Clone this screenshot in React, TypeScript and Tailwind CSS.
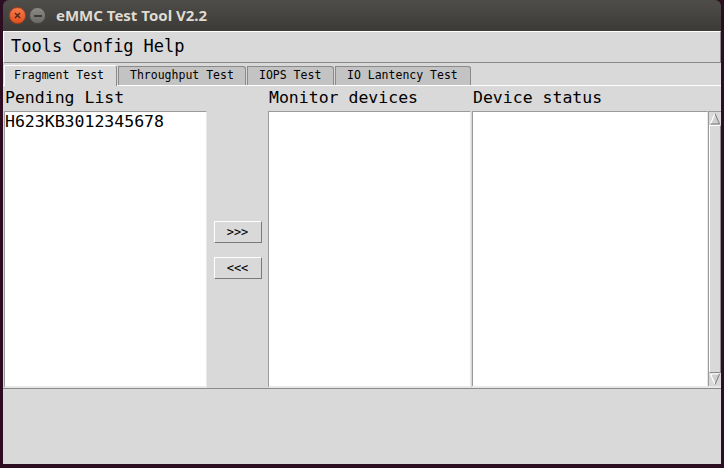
import React from "react";

const mono = { fontFamily: '"DejaVu Sans Mono", "Liberation Mono", monospace' };

function Tab({ label, selected, w }: { label: string; selected?: boolean; w: number }) {
  if (selected) {
    return (
      <div
        className="h-[21px] border-l border-t border-r border-l-white border-t-white border-r-[#8a8a8a] rounded-tr-[3px] bg-[#d9d9d9] flex items-center pl-[9px] text-[11.5px] text-black relative top-[1px]"
        style={{ width: w }}
      >
        {label}
      </div>
    );
  }
  return (
    <div
      className="h-[19px] mt-[2px] border border-b-0 border-[#8a8a8a] rounded-tr-[3px] bg-[#c3c3c3] flex items-center pl-[11px] text-[11.5px] text-black"
      style={{ width: w }}
    >
      {label}
    </div>
  );
}

function Btn({ label }: { label: string }) {
  return (
    <div className="w-[48px] h-[22px] bg-[#d9d9d9] border border-t-white border-l-white border-r-[#7a7a7a] border-b-[#7a7a7a] flex items-center justify-center text-[12px] text-black">
      {label}
    </div>
  );
}

export default function App() {
  return (
    <div className="w-[724px] h-[468px] bg-[#2c0d22] flex flex-col px-[3px] pb-[4px]" style={mono}>
      {/* title bar */}
      <div className="h-[31px] rounded-t-[6px] bg-gradient-to-b from-[#4e4d49] to-[#3c3b37] flex items-center pl-[6px] gap-[3px] shrink-0">
        <div className="w-[17px] h-[17px] rounded-full bg-gradient-to-b from-[#f47a4a] to-[#e2501f] flex items-center justify-center border border-[#b0401a]">
          <svg width="7" height="7" viewBox="0 0 7 7">
            <path d="M1 1 L6 6 M6 1 L1 6" stroke="#4a2414" strokeWidth="1.3" />
          </svg>
        </div>
        <div className="w-[17px] h-[17px] rounded-full bg-gradient-to-b from-[#8a8984] to-[#6c6b67] flex items-center justify-center border border-[#4a4945]">
          <div className="w-[8px] h-[2px] bg-[#3c3b37]" />
        </div>
        <div
          className="ml-[7px] text-[15px] font-bold text-[#dfdbd2]"
          style={{ fontFamily: '"Noto Sans", "DejaVu Sans", sans-serif' }}
        >
          eMMC Test Tool V2.2
        </div>
      </div>

      {/* body */}
      <div className="flex-1 bg-[#d9d9d9] flex flex-col">
        {/* menu */}
        <div className="h-[32px] border-t border-l border-t-white border-l-white border-b border-r border-b-[#8a8a8a] border-r-[#8a8a8a] flex items-center pl-[7px] text-[17px] text-black gap-[10px] shrink-0">
          <span>Tools</span>
          <span>Config</span>
          <span>Help</span>
        </div>

        {/* tabs */}
        <div className="flex items-end h-[22px] pl-[1px] gap-[1px] shrink-0">
          <Tab label="Fragment Test" selected w={113} />
          <Tab label="Throughput Test" w={128} />
          <Tab label="IOPS Test" w={87} />
          <Tab label="IO Lantency Test" w={136} />
        </div>

        {/* notebook content */}
        <div className="h-[304px] border-t border-t-white border-b border-b-[#8a8a8a] flex shrink-0">
          {/* col 1 */}
          <div className="w-[203px] ml-[1px] flex flex-col">
            <div className="h-[25px] text-[16.5px] leading-[24px] pl-[1px] text-black">Pending List</div>
            <div className="flex-1 bg-white border-t border-l border-t-[#9a9a9a] border-l-[#9a9a9a] border-b-2 border-r border-b-[#e8e8e8] border-r-[#e8e8e8] text-[16.5px] leading-[20px] text-black">
              H623KB3012345678
            </div>
          </div>
          {/* buttons */}
          <div className="w-[61px] flex flex-col items-center justify-center gap-[14px] pt-[25px]">
            <Btn label=">>>" />
            <Btn label="<<<" />
          </div>
          {/* col 2 */}
          <div className="w-[203px] flex flex-col">
            <div className="h-[25px] text-[16.5px] leading-[24px] pl-[1px] text-black">Monitor devices</div>
            <div className="flex-1 bg-white border-t border-l border-t-[#9a9a9a] border-l-[#9a9a9a] border-b-2 border-r border-b-[#e8e8e8] border-r-[#e8e8e8]" />
          </div>
          {/* col 3 */}
          <div className="flex-1 ml-[1px] flex flex-col">
            <div className="h-[25px] text-[16.5px] leading-[24px] pl-[1px] text-black">Device status</div>
            <div className="flex-1 flex border-b-2 border-b-[#e8e8e8]">
              <div className="flex-1 bg-white border-t border-l border-t-[#9a9a9a] border-l-[#9a9a9a] border-r border-r-[#e8e8e8]" />
              <div className="w-[13px] bg-[#c3c3c3] border-l border-t border-[#9a9a9a] flex flex-col">
                <svg width="12" height="13" viewBox="0 0 12 13" className="shrink-0">
                  <rect x="0" y="0" width="12" height="13" fill="#d9d9d9" />
                  <path d="M1.5 12 L6 1.5 L10.5 12 Z" fill="#cfcfcf" />
                  <path d="M1.5 12 L6 1.5" fill="none" stroke="#ffffff" strokeWidth="1.2" />
                  <path d="M1.5 12 L10.5 12 L6 1.5" fill="none" stroke="#7a7a7a" strokeWidth="1" />
                </svg>
                <div className="flex-1 bg-[#d9d9d9] border border-t-white border-l-white border-b-[#8a8a8a] border-r-[#8a8a8a]" />
                <svg width="12" height="13" viewBox="0 0 12 13" className="shrink-0">
                  <rect x="0" y="0" width="12" height="13" fill="#d9d9d9" />
                  <path d="M1.5 1 L6 11.5 L10.5 1 Z" fill="#cfcfcf" />
                  <path d="M1.5 1 L10.5 1 M1.5 1 L6 11.5" fill="none" stroke="#ffffff" strokeWidth="1.2" />
                  <path d="M10.5 1 L6 11.5" fill="none" stroke="#7a7a7a" strokeWidth="1" />
                </svg>
              </div>
            </div>
          </div>
        </div>

        <div className="flex-1" />
      </div>
    </div>
  );
}
